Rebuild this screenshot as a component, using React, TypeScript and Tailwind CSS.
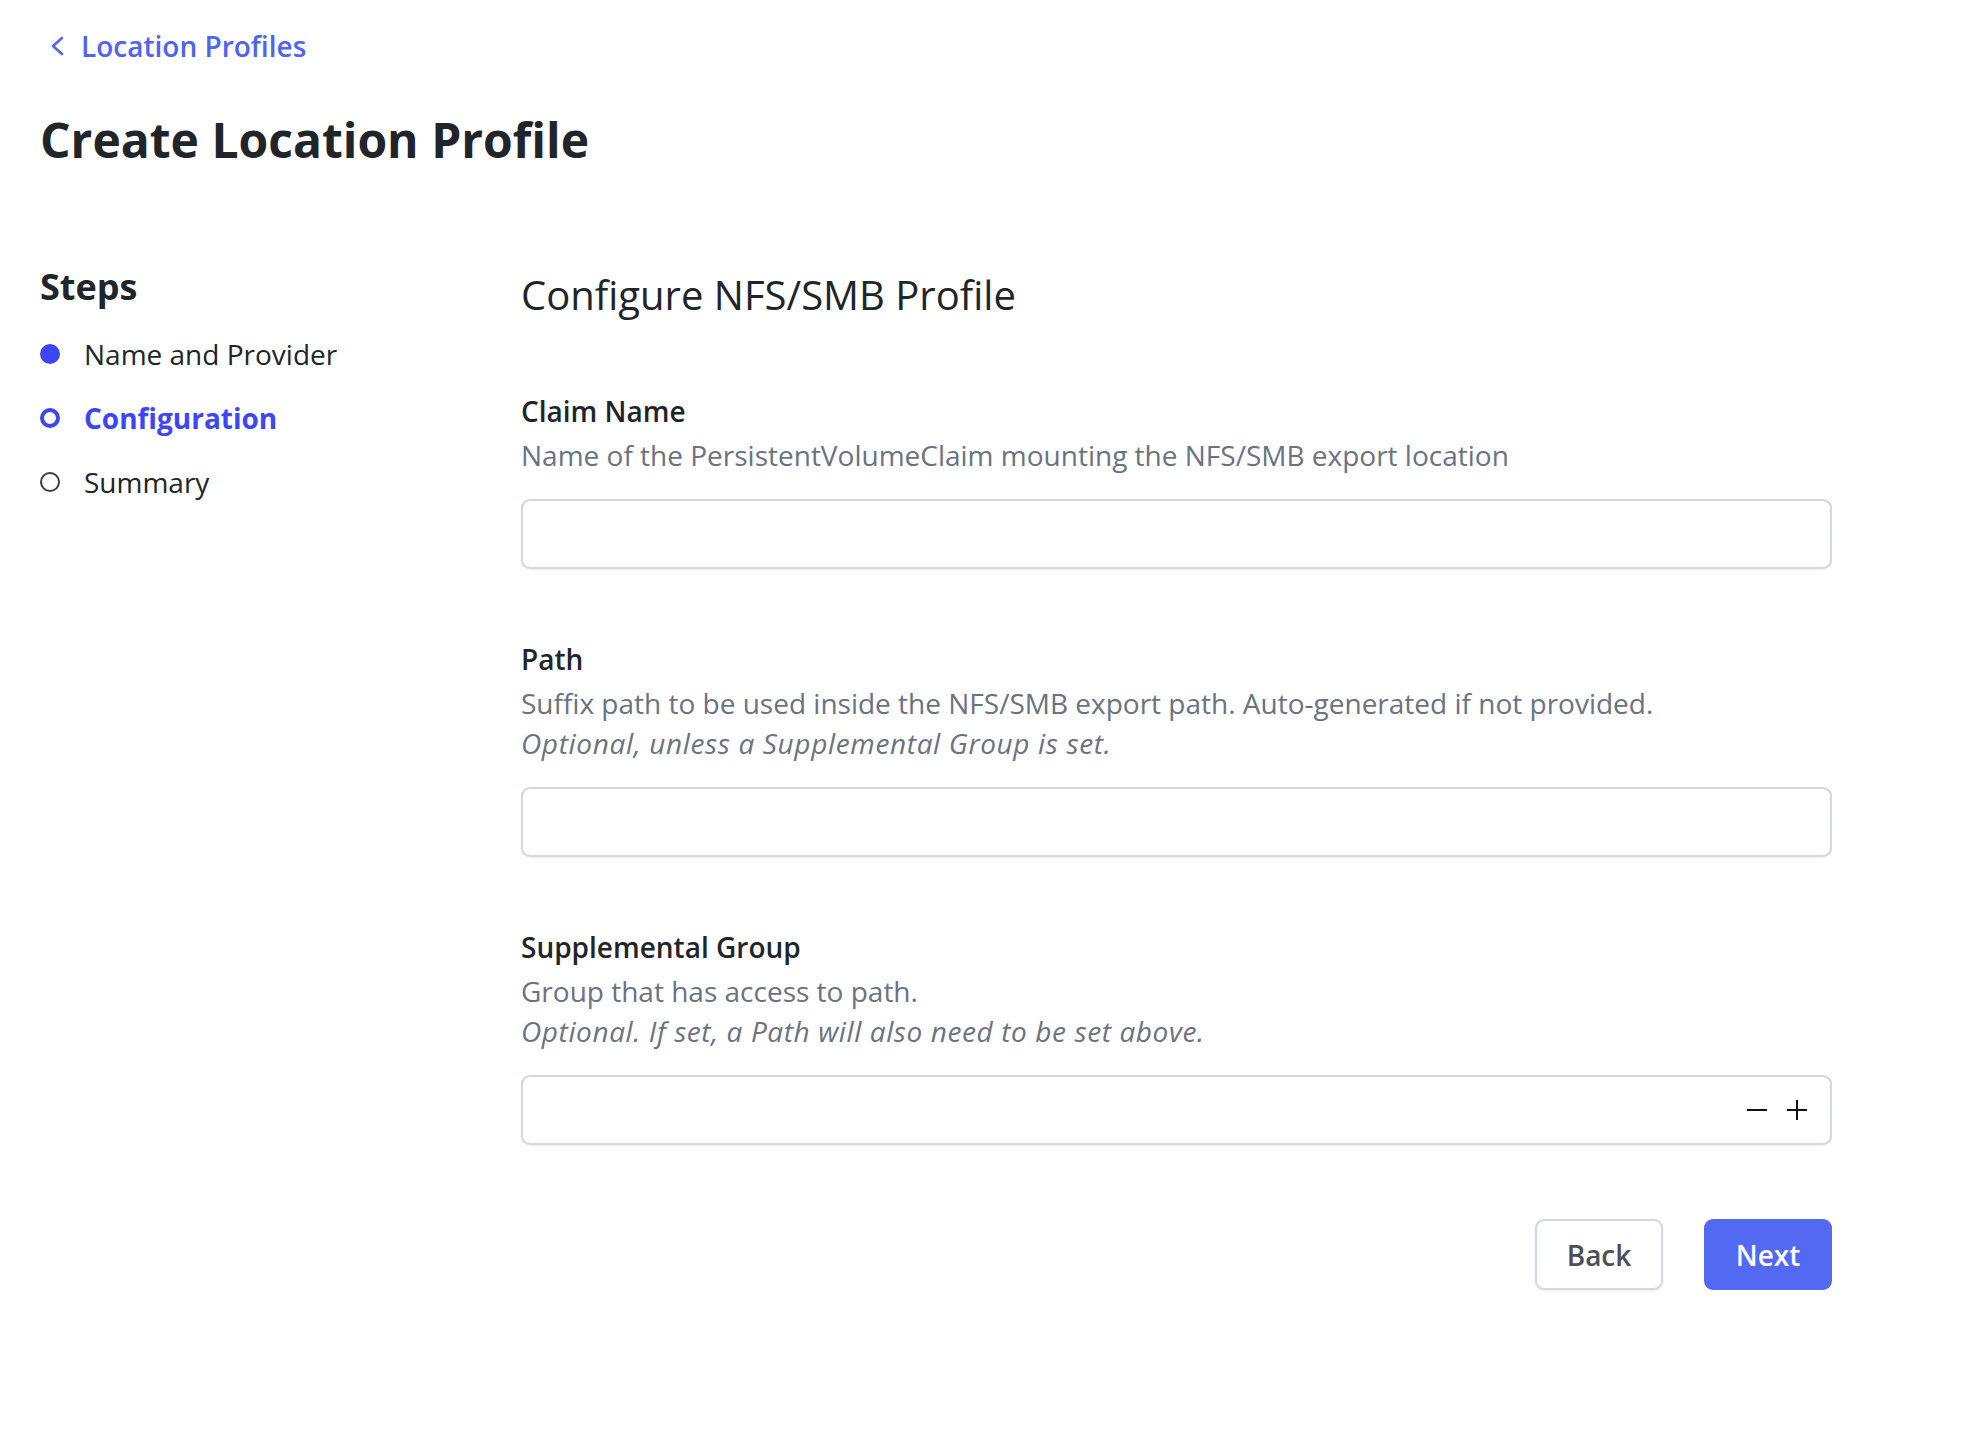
import { useState } from "react"

const steps = [
  { label: "Name and Provider", state: "done" },
  { label: "Configuration", state: "current" },
  { label: "Summary", state: "todo" },
]

const inputBox = "w-full h-[70px] rounded-[9px] border-2 border-[#d3d7e0] bg-white shadow-[0_1px_2px_rgba(0,0,0,0.06)] px-5 text-[28px] text-[#212529] focus:outline-none focus:border-[#5469f1]"

export default function App() {
  const [claim, setClaim] = useState("")
  const [path, setPath] = useState("")
  const [group, setGroup] = useState("")

  const bump = (d: number) => {
    const n = parseInt(group || "0", 10)
    setGroup(String((isNaN(n) ? 0 : n) + d))
  }

  return (
    <div className="min-h-screen bg-white font-['Open_Sans','Noto_Sans',sans-serif] text-[#212529] pl-[40px] pt-[26px]">
      {/* Back link */}
      <a href="#" className="flex items-center gap-[17px] h-[40px] text-[28px] font-semibold text-[#5064ee] w-fit">
        <svg width="14" height="20" viewBox="0 0 14 20" fill="none" className="ml-[10px]">
          <path d="M12 2 3 10l9 8" stroke="currentColor" strokeWidth="2.6" strokeLinecap="round" strokeLinejoin="round" />
        </svg>
        Location Profiles
      </a>

      <h1 className="mt-[44px] text-[48px] leading-[60px] font-bold">Create Location Profile</h1>

      <div className="flex mt-[95px]">
        {/* Steps sidebar */}
        <div className="w-[481px] shrink-0">
          <h2 className="text-[36px] leading-[44px] font-bold">Steps</h2>
          <ul className="mt-[25px] flex flex-col gap-[24px]">
            {steps.map((s) => (
              <li key={s.label} className="flex items-center h-[40px] text-[28px]">
                <span className="w-[44px] flex items-center">
                  {s.state === "done" && <span className="w-[20px] h-[20px] rounded-full bg-[#3c46f5]" />}
                  {s.state === "current" && <span className="w-[20px] h-[20px] rounded-full border-[4px] border-[#3c46f5]" />}
                  {s.state === "todo" && <span className="w-[20px] h-[20px] rounded-full border-2 border-[#3a3f47]" />}
                </span>
                <span className={s.state === "current" ? "font-bold text-[#3c46f5]" : "text-[#212529]"}>{s.label}</span>
              </li>
            ))}
          </ul>
        </div>

        {/* Form */}
        <div className="w-[1311px] pt-[4px]">
          <h2 className="text-[40px] leading-[52px] font-normal">Configure NFS/SMB Profile</h2>

          <div className="mt-[70px]">
            <label className="block text-[28px] leading-[40px] font-semibold">Claim Name</label>
            <p className="mt-[4px] text-[28px] leading-[40px] text-[#6b7280]">Name of the PersistentVolumeClaim mounting the NFS/SMB export location</p>
            <input value={claim} onChange={(e) => setClaim(e.target.value)} className={`mt-[24px] ${inputBox}`} />
          </div>

          <div className="mt-[70px]">
            <label className="block text-[28px] leading-[40px] font-semibold">Path</label>
            <p className="mt-[4px] text-[28px] leading-[40px] text-[#6b7280]">Suffix path to be used inside the NFS/SMB export path. Auto-generated if not provided.</p>
            <p className="text-[28px] leading-[40px] text-[#6b7280] italic tracking-[0.65px]">Optional, unless a Supplemental Group is set.</p>
            <input value={path} onChange={(e) => setPath(e.target.value)} className={`mt-[24px] ${inputBox}`} />
          </div>

          <div className="mt-[70px]">
            <label className="block text-[28px] leading-[40px] font-semibold">Supplemental Group</label>
            <p className="mt-[4px] text-[28px] leading-[40px] text-[#6b7280]">Group that has access to path.</p>
            <p className="text-[28px] leading-[40px] text-[#6b7280] italic tracking-[0.6px]">Optional. If set, a Path will also need to be set above.</p>
            <div className="relative mt-[24px]">
              <input value={group} onChange={(e) => setGroup(e.target.value)} className={`${inputBox} pr-[100px]`} />
              <div className="absolute right-[25px] top-0 h-full flex items-center gap-[20px]">
                <button type="button" onClick={() => bump(-1)} aria-label="Decrease">
                  <svg width="20" height="20" viewBox="0 0 20 20"><path d="M0 10h20" stroke="#111" strokeWidth="2" /></svg>
                </button>
                <button type="button" onClick={() => bump(1)} aria-label="Increase">
                  <svg width="20" height="20" viewBox="0 0 20 20"><path d="M0 10h20M10 0v20" stroke="#111" strokeWidth="2" /></svg>
                </button>
              </div>
            </div>
          </div>

          <div className="mt-[74px] flex justify-end gap-[41px]">
            <button className="w-[128px] h-[71px] rounded-[9px] border-2 border-[#d3d7e0] bg-white shadow-[0_1px_3px_rgba(0,0,0,0.08)] text-[28px] font-semibold text-[#4b5058]">
              Back
            </button>
            <button className="w-[128px] h-[71px] rounded-[9px] bg-[#5469f1] text-[28px] font-semibold text-white">
              Next
            </button>
          </div>
        </div>
      </div>
    </div>
  )
}
